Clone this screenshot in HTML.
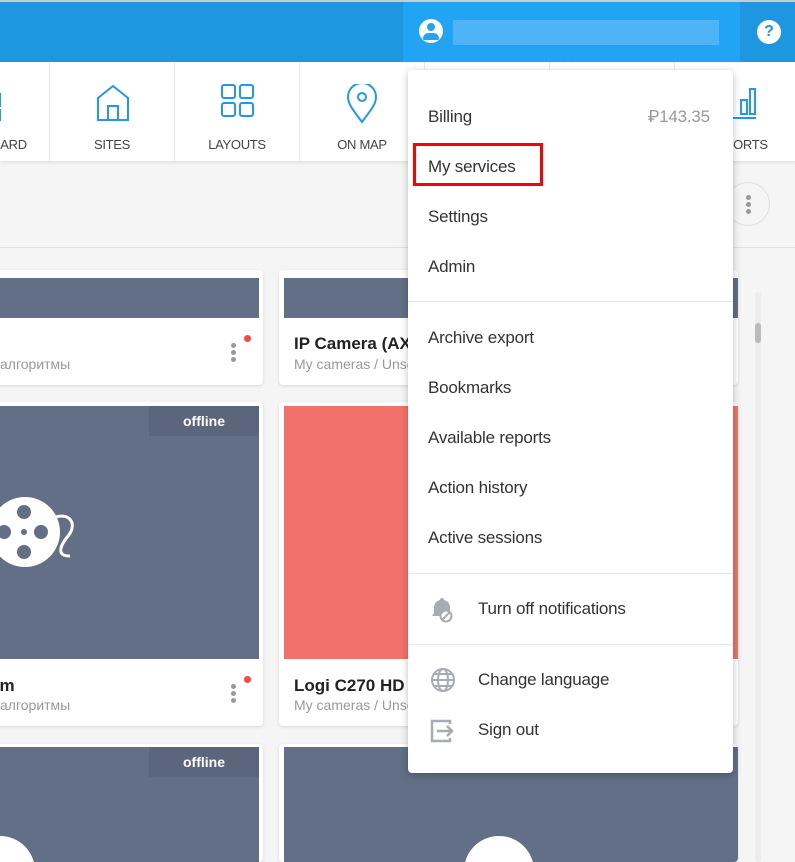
<!DOCTYPE html>
<html style="overflow:hidden"><head><meta charset="utf-8"><style>
*{margin:0;padding:0;box-sizing:border-box}
html,body{width:795px;height:862px;overflow:hidden}
body{background:#f5f5f5;font-family:"Liberation Sans",Roboto,sans-serif;position:relative}
#w{position:absolute;left:0;top:0;width:795px;height:862px;overflow:hidden}
.abs{position:absolute}
.nav{top:62px;left:0;width:795px;height:99px;background:#fff;box-shadow:0 2px 3px rgba(0,0,0,.08);overflow:hidden}
.ni{position:absolute;top:0;height:99px;width:125px;border-right:1px solid #e8e8e8;text-align:center;font-size:13px;color:#444}
.ni span{position:absolute;top:75px;left:0;right:0;letter-spacing:-0.3px}
.ni svg{position:absolute;top:22px;left:46px}
.card{position:absolute;background:#fff;border-radius:4px;box-shadow:0 1px 3px rgba(0,0,0,.12);overflow:hidden}
.img{position:absolute;background:#636f86}
.t{position:absolute;font-size:17px;font-weight:bold;color:#222;white-space:nowrap}
.s{position:absolute;font-size:14px;color:#999;white-space:nowrap}
.menu{top:70px;left:408px;width:325px;height:703px;background:#fff;border-radius:4px;box-shadow:0 2px 8px rgba(0,0,0,.25)}
.mi{position:absolute;left:20px;font-size:17px;color:#333;white-space:nowrap;letter-spacing:-0.2px}
.hr{position:absolute;left:0;width:325px;height:1px;background:#e6e6e6}
.dots{position:absolute;width:4px}
.dots i{display:block;width:5px;height:5px;border-radius:50%;background:#999;margin-bottom:2px}
</style></head><body><div id="w">
<div class="abs" style="top:0;left:0;width:795px;height:2px;background:#ccc"></div>
<div class="abs" style="top:2px;left:0;width:795px;height:60px;background:#1e96e0"></div>
<div class="abs" style="top:2px;left:403px;width:337px;height:60px;background:#22a4f5"></div>
<div class="abs" style="top:19px;left:419px;width:24px;height:24px;border-radius:50%;background:#fff"></div>
<div class="abs" style="top:23px;left:427px;width:8px;height:8px;border-radius:50%;background:#22a4f5"></div>
<div class="abs" style="top:33px;left:423px;width:16px;height:7px;border-radius:8px 8px 2px 2px;background:#22a4f5"></div>
<div class="abs" style="top:20px;left:453px;width:266px;height:25px;background:#5ab8f7;opacity:.8"></div>
<div class="abs" style="top:20px;left:757px;width:24px;height:24px;border-radius:50%;background:#fff;color:#1e96e0;font-weight:bold;font-size:16px;text-align:center;line-height:24px">?</div>

<div class="abs nav">
<div class="ni" style="left:-75px"><svg width="32" height="40" style="left:60px"><rect x="1" y="10" width="14" height="12" fill="none" stroke="#2196f3" stroke-width="2"/><rect x="1" y="26" width="14" height="10" fill="none" stroke="#2196f3" stroke-width="2"/></svg><span>DASHBOARD</span></div>
<div class="ni" style="left:50px"><svg width="34" height="38" style="left:46px"><path d="M2 14 L17 2 L32 14 V36 H2 Z M12 36 V22 H22 V36" fill="none" stroke="#2196f3" stroke-width="2"/></svg><span>SITES</span></div>
<div class="ni" style="left:175px"><svg width="34" height="34" style="left:46px"><g fill="none" stroke="#2196f3" stroke-width="2"><rect x="1" y="1" width="13" height="13" rx="2"/><rect x="19" y="1" width="13" height="13" rx="2"/><rect x="1" y="19" width="13" height="13" rx="2"/><rect x="19" y="19" width="13" height="13" rx="2"/></g></svg><span>LAYOUTS</span></div>
<div class="ni" style="left:300px"><svg width="34" height="40" style="left:45px"><path d="M17 38 C8 26 3 20 3 13 A14 14 0 0 1 31 13 C31 20 26 26 17 38 Z" fill="none" stroke="#2196f3" stroke-width="2"/><circle cx="17" cy="13" r="4" fill="none" stroke="#2196f3" stroke-width="2"/></svg><span>ON MAP</span></div>
<div class="ni" style="left:425px"></div>
<div class="ni" style="left:550px"></div>
<div class="ni" style="left:675px;border:none"><svg width="34" height="40" style="left:48px"><path d="M18 16 h6 v14 h-6 z M27 5 h5 v25 h-5 z M3 34 h30" fill="none" stroke="#2196f3" stroke-width="2"/></svg><span>REPORTS</span></div>
</div>

<div class="abs" style="top:247px;left:0;width:795px;height:1px;background:#e0e0e0"></div>
<div class="abs" style="top:182px;left:726px;width:44px;height:44px;border-radius:50%;border:1px solid #ddd"></div>
<div class="dots" style="top:195px;left:746px"><i></i><i></i><i></i></div>

<div class="card" style="top:270px;left:-10px;width:273px;height:115px"><div class="img" style="top:8px;left:0;width:269px;height:40px"></div><div class="s" style="top:86px;left:10px">алгоритмы</div><div class="dots" style="top:73px;left:241px"><i></i><i></i><i></i></div><div class="abs" style="top:65px;left:254px;width:7px;height:7px;border-radius:50%;background:#f44"></div></div>
<div class="card" style="top:270px;left:279px;width:459px;height:115px"><div class="img" style="top:8px;left:5px;width:454px;height:40px"></div><div class="t" style="top:64px;left:15px">IP Camera (AXIS)</div><div class="s" style="top:86px;left:15px">My cameras / Unsorted</div></div>
<div class="card" style="top:402px;left:-10px;width:273px;height:324px"><div class="img" style="top:4px;left:0;width:269px;height:253px"></div><div class="abs" style="top:4px;left:159px;width:110px;height:30px;background:#5b667c;color:#fff;font-size:14px;font-weight:bold;text-align:center;line-height:30px">offline</div>
<svg class="abs" style="top:94px;left:0" width="100" height="80"><circle cx="35" cy="36" r="35" fill="#fff"/><g fill="#636f86"><circle cx="34" cy="16" r="7"/><circle cx="34" cy="56" r="7"/><circle cx="14" cy="36" r="7"/><circle cx="51" cy="36" r="7"/><circle cx="34" cy="36" r="3"/></g><path d="M60 23 C80 14 88 28 78 40 C70 50 66 60 80 60" fill="none" stroke="#fff" stroke-width="3"/></svg>
<div class="t" style="top:274px;left:0">am</div><div class="s" style="top:295px;left:10px">алгоритмы</div><div class="dots" style="top:282px;left:241px"><i></i><i></i><i></i></div><div class="abs" style="top:274px;left:254px;width:7px;height:7px;border-radius:50%;background:#f44"></div></div>
<div class="card" style="top:402px;left:279px;width:459px;height:324px"><div class="abs" style="top:4px;left:5px;width:454px;height:253px;background:#f2726b"></div><div class="t" style="top:274px;left:15px">Logi C270 HD WebCam</div><div class="s" style="top:295px;left:15px">My cameras / Unsorted</div></div>
<div class="card" style="top:744px;left:-10px;width:273px;height:118px"><div class="img" style="top:3px;left:0;width:269px;height:115px"></div><div class="abs" style="top:3px;left:159px;width:110px;height:30px;background:#5b667c;color:#fff;font-size:14px;font-weight:bold;text-align:center;line-height:30px">offline</div><div class="abs" style="top:92px;left:-25px;width:70px;height:70px;border-radius:50%;background:#fff"></div></div>
<div class="card" style="top:744px;left:279px;width:459px;height:118px"><div class="img" style="top:3px;left:5px;width:454px;height:115px"></div><div class="abs" style="top:92px;left:185px;width:70px;height:70px;border-radius:50%;background:#fff"></div></div>
<div class="abs" style="top:292px;left:755px;width:6px;height:570px;background:#ececec;border-radius:3px"></div>
<div class="abs" style="top:323px;left:755px;width:6px;height:20px;background:#bbb;border-radius:3px"></div>

<div class="abs" style="top:64px;left:562px;width:12px;height:12px;background:#fff;transform:rotate(45deg)"></div>
<div class="abs menu">
<div class="mi" style="top:37px">Billing</div><div class="mi" style="top:37px;left:240px;color:#999">₽143.35</div>
<div class="mi" style="top:87px">My services</div>
<div class="abs" style="top:73px;left:5px;width:130px;height:43px;border:3px solid #f00"></div>
<div class="mi" style="top:137px">Settings</div>
<div class="mi" style="top:187px">Admin</div>
<div class="hr" style="top:231px"></div>
<div class="mi" style="top:258px">Archive export</div>
<div class="mi" style="top:308px">Bookmarks</div>
<div class="mi" style="top:358px">Available reports</div>
<div class="mi" style="top:408px">Action history</div>
<div class="mi" style="top:458px">Active sessions</div>
<div class="hr" style="top:503px"></div>
<svg class="abs" style="top:527px;left:22px" width="26" height="26"><path d="M12 1 a2 2 0 0 1 2 2 c4 1 6 4 6 8 v5 l2 3 H2 l2-3 v-5 c0-4 2-7 6-8 a2 2 0 0 1 2-2z" fill="#a7abb3"/><circle cx="16" cy="19" r="5.5" fill="#fff" stroke="#a7abb3" stroke-width="2"/><path d="M12.5 22.5 L19.5 15.5" stroke="#a7abb3" stroke-width="2"/></svg>
<div class="mi" style="top:529px;left:70px">Turn off notifications</div>
<div class="hr" style="top:574px"></div>
<svg class="abs" style="top:597px;left:22px" width="26" height="26"><g fill="none" stroke="#a7abb3" stroke-width="2"><circle cx="13" cy="13" r="11"/><ellipse cx="13" cy="13" rx="5" ry="11"/><path d="M2 13h22M4 7h18M4 19h18"/></g></svg>
<div class="mi" style="top:600px;left:70px">Change language</div>
<svg class="abs" style="top:648px;left:22px" width="26" height="26"><path d="M20 6 V3 H2 V23 H20 V20" fill="none" stroke="#a7abb3" stroke-width="2.5"/><path d="M7 13 H22 M17 8 L22 13 L17 18" fill="none" stroke="#a7abb3" stroke-width="2.5"/></svg>
<div class="mi" style="top:650px;left:70px">Sign out</div>
</div>
</div></body></html>
